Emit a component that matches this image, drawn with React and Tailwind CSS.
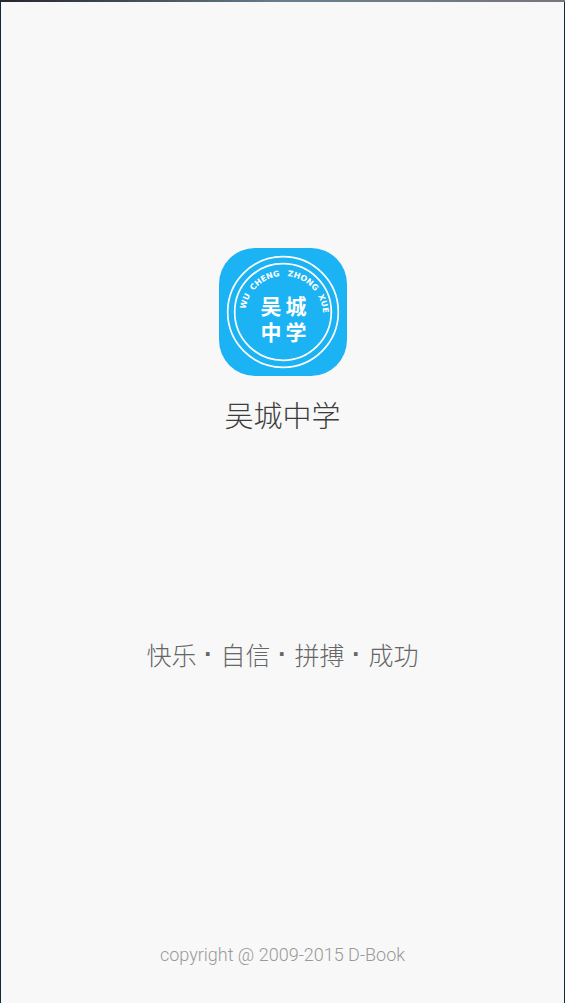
import React from 'react';

const MOTTO = ['快乐', '自信', '拼搏', '成功'];

const ARC_WORDS = [
  { word: 'WU', offset: '11%' },
  { word: 'CHENG', offset: '34%' },
  { word: 'ZHONG', offset: '66%' },
  { word: 'XUE', offset: '91%' },
];

const SchoolLogo = () => (
  <svg className="h-32 w-32" viewBox="0 0 128 128" role="img" aria-label="吴城中学">
    <defs>
      <path id="nameArc" d="M 26 67 A 39 39 0 0 1 104 67" />
    </defs>
    <rect width="128" height="128" rx="36" fill="#1cb3f4" />
    <circle cx="64" cy="64" r="55.3" fill="none" stroke="#fff" strokeWidth="1.7" />
    <circle cx="64" cy="64" r="48.3" fill="none" stroke="#fff" strokeWidth="1.7" />
    <g fill="#fff" fontFamily="'DejaVu Sans', sans-serif" fontSize="8" fontWeight="700" textAnchor="middle">
      {ARC_WORDS.map(({ word, offset }) => (
        <text key={word}>
          <textPath href="#nameArc" startOffset={offset}>{word}</textPath>
        </text>
      ))}
    </g>
    <g fill="#fff" fontFamily="'Noto Sans CJK SC', sans-serif" fontSize="21" fontWeight="700" textAnchor="middle">
      <text x="52" y="66">吴</text>
      <text x="77" y="66">城</text>
      <text x="52" y="92">中</text>
      <text x="77" y="92">学</text>
    </g>
  </svg>
);

const App = () => {
  return (
    <div className="flex min-h-screen flex-col bg-[#0d2b3a] font-['Noto_Sans_CJK_SC',sans-serif]">
      <div className="h-0.5 bg-linear-to-r from-[#25262e] via-[#687f8b] to-[#77757d]" />
      <main className="mx-px flex flex-1 flex-col items-center bg-[#f8f8f8] px-4 pt-[246px] pb-9">
        <SchoolLogo />
        <h1 className="mt-4.5 text-[29px] leading-10 font-light text-[#3c3c3c]">吴城中学</h1>
        <p className="mt-50 flex text-[25px] leading-10 font-light text-[#666666]">
          {MOTTO.map((word, i) => (
            <React.Fragment key={word}>
              {i > 0 && <span className="w-6 text-center font-['Liberation_Sans',sans-serif] font-bold">·</span>}
              <span>{word}</span>
            </React.Fragment>
          ))}
        </p>
        <footer className="mt-auto font-['Roboto',sans-serif] text-[18px] leading-6 font-light text-[#999999]">
          copyright @ 2009-2015 D-Book
        </footer>
      </main>
    </div>
  );
};

export default App;
